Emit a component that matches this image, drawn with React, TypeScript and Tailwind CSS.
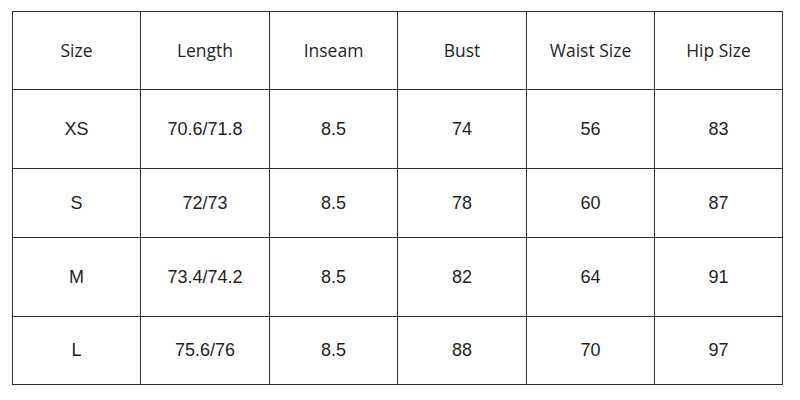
const headers = ["Size", "Length", "Inseam", "Bust", "Waist Size", "Hip Size"];

const rows = [
  { h: "h-[79px]", cells: ["XS", "70.6/71.8", "8.5", "74", "56", "83"] },
  { h: "h-[69px]", cells: ["S", "72/73", "8.5", "78", "60", "87"] },
  { h: "h-[79px]", cells: ["M", "73.4/74.2", "8.5", "82", "64", "91"] },
  { h: "h-[68px]", cells: ["L", "75.6/76", "8.5", "88", "70", "97"] },
];

const grid = "grid grid-cols-[128px_129px_128px_129px_128px_128px]";

export default function App() {
  return (
    <div className="h-[400px] w-[800px] bg-white pl-[12px] pt-[11px]">
      <div className="w-[771px] border-l border-t border-[#2e2e2e]">
        {/* Header */}
        <div className={grid}>
          {headers.map((h) => (
            <div
              key={h}
              className="flex h-[78px] items-center justify-center border-b border-r border-[#2e2e2e] font-['Open_Sans',sans-serif] text-[17.5px] text-[#1f1f1f]"
            >
              {h}
            </div>
          ))}
        </div>
        {rows.map((r) => (
          <div key={r.cells[0]} className={grid}>
            {r.cells.map((c, i) => (
              <div
                key={i}
                className={`flex ${r.h} items-center justify-center border-b border-r border-[#2e2e2e] font-['Liberation_Sans',Arial,sans-serif] text-[18px] text-[#1f1f1f]`}
              >
                {c}
              </div>
            ))}
          </div>
        ))}
      </div>
    </div>
  );
}
